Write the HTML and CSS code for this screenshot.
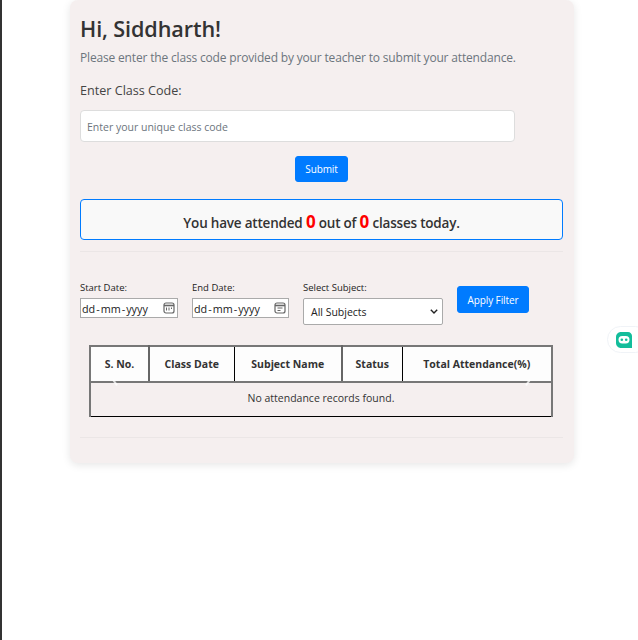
FILE: index.html
```html
<!DOCTYPE html>
<html lang="en">
<head>
  <meta charset="UTF-8">
  <title>Attendance</title>
  <link rel="stylesheet" href="styles.css">
</head>
<body>
  <div class="card">
    <h2 class="greeting">Hi, Siddharth!</h2>
    <p class="intro">Please enter the class code provided by your teacher to submit your attendance.</p>
    <label class="code-label" for="code">Enter Class Code:</label>
    <input class="code-input" id="code" type="text" placeholder="Enter your unique class code">
    <div class="submit-row"><button class="btn">Submit</button></div>
    <div class="summary">You have attended <span class="count">0</span> out of <span class="count">0</span> classes today.</div>
    <hr class="rule">
    <div class="filters">
      <div class="field">
        <label>Start Date:</label>
        <div class="date-box start-date">
          <span>dd<i>-</i>mm<i>-</i>yyyy</span>
          <svg width="12" height="12" viewBox="0 0 12 12"><rect x="1" y="1" width="10" height="10" rx="2" fill="none" stroke="#666" stroke-width="1.2"/><path d="M1 3.500h10" stroke="#666" stroke-width="1.600"/><path d="M3.500 5.500v3M6 5.500v3M8.500 5.500v1.500" stroke="#666"/></svg>
        </div>
      </div>
      <div class="field">
        <label>End Date:</label>
        <div class="date-box end-date">
          <span>dd<i>-</i>mm<i>-</i>yyyy</span>
          <svg width="12" height="12" viewBox="0 0 12 12"><rect x="1" y="1" width="10" height="10" rx="2" fill="none" stroke="#666" stroke-width="1.2"/><path d="M1 3.500h10" stroke="#666" stroke-width="1.600"/><path d="M3.500 6h5M3.500 8.500h3" stroke="#666"/></svg>
        </div>
      </div>
      <div class="field">
        <label>Select Subject:</label>
        <div class="select-box">
          <span>All Subjects</span>
          <svg width="8" height="5" viewBox="0 0 8 5"><path d="M.8.8 4 4l3.200-3.200" fill="none" stroke="#222" stroke-width="1.400"/></svg>
        </div>
      </div>
      <button class="btn btn-filter">Apply Filter</button>
    </div>
    <div class="table-wrap">
      <table class="records">
        <thead>
          <tr>
            <th class="col-sno">S. No.</th>
            <th class="col-date">Class Date</th>
            <th class="col-subject">Subject Name</th>
            <th class="col-status">Status</th>
            <th>Total Attendance(%)</th>
          </tr>
        </thead>
        <tbody>
          <tr><td colspan="5">No attendance records found.</td></tr>
        </tbody>
      </table>
      <span class="slide-mark mark-prev"></span>
      <span class="slide-mark mark-next"></span>
    </div>
    <hr class="rule rule-bottom">
  </div>
  <div class="chat-tab">
    <svg width="16" height="16" viewBox="0 0 16 16"><path d="M5 0h7c2.200 0 4 1.800 4 4v12H5c-2.800 0-5-2.200-5-5V5c0-2.800 2.200-5 5-5z" fill="#13bd9b"/><rect x="2.500" y="4" width="11" height="7.500" rx="3.700" fill="#fff"/><circle cx="5.800" cy="7.700" r="1.300" fill="#13bd9b"/><circle cx="10.200" cy="7.700" r="1.300" fill="#13bd9b"/></svg>
  </div>
</body>
</html>
```

FILE: styles.css
```css
* {
  box-sizing: border-box;
}
body {
  margin: 0;
  min-height: 640px;
  border-left: 2px solid #333;
  background: #fff;
  color: #333;
  font-family: "Open Sans", "Noto Sans", sans-serif;
  overflow: hidden;
}
.card {
  width: 504px;
  height: 463px;
  margin-left: 68px;
  padding: 15px 10px 0;
  background: #f5efef;
  border-radius: 8px;
  box-shadow: 0 2px 8px rgba(0, 0, 0, .1);
}
.greeting {
  margin: 0;
  font-size: 21.600px;
  line-height: 28px;
  font-weight: 600;
  letter-spacing: -.1px;
  color: #333;
}
.intro {
  margin: 6px 0 0;
  font-size: 12px;
  line-height: 18px;
  letter-spacing: -.17px;
  color: #6c757d;
}
.code-label {
  display: block;
  margin-top: 15px;
  font-size: 12.600px;
  line-height: 18px;
  color: #444;
}
.code-input {
  display: block;
  width: 435px;
  height: 32px;
  margin-top: 10px;
  padding: 2px 6px 0;
  background: #fff;
  border: 1px solid #ddd;
  border-radius: 4px;
  font: 10.500px "Open Sans", sans-serif;
}
.code-input::placeholder {
  color: #6c757d;
}
.submit-row {
  display: flex;
  justify-content: center;
  width: 483px;
  margin-top: 14px;
}
.btn {
  height: 26px;
  padding: 0 9px;
  background: #007bff;
  border: 1px solid #007bff;
  border-radius: 3px;
  color: #fff;
  font: 10px "Open Sans", sans-serif;
  letter-spacing: -.1px;
}
.summary {
  width: 483px;
  height: 41px;
  margin-top: 17px;
  padding-top: 12px;
  background: #f9f9f9;
  border: 1px solid #007bff;
  border-radius: 4px;
  text-align: center;
  font-size: 13.500px;
  line-height: 20px;
  font-weight: 600;
  letter-spacing: -.2px;
}
.count {
  color: #f00;
  font-size: 17px;
  font-weight: 700;
}
.rule {
  width: 483px;
  margin: 11px 0 0;
  border: 0;
  border-top: 1px solid #ebe6e6;
}
.filters {
  display: flex;
  align-items: flex-start;
  gap: 14px;
  margin-top: 30px;
}
.field label {
  display: block;
  font-size: 9.500px;
  line-height: 12px;
  margin-bottom: 4px;
  color: #222;
}
.date-box {
  display: flex;
  align-items: center;
  justify-content: space-between;
  height: 20px;
  padding: 0 2px 0 1px;
  background: #fff;
  border: 1px solid #aaa;
  font-size: 10.800px;
  color: #222;
}
.date-box i {
  font-style: normal;
  margin: 0 1px;
}
.start-date {
  width: 98px;
}
.end-date {
  width: 97px;
}
.select-box {
  display: flex;
  align-items: center;
  justify-content: space-between;
  width: 140px;
  height: 27px;
  padding: 0 4px 0 7px;
  background: #fff;
  border: 1px solid #aaa;
  border-radius: 2px;
  font-size: 10.500px;
  color: #222;
}
.btn-filter {
  width: 72px;
  height: 27px;
  padding: 0;
  margin-top: 4px;
}
.table-wrap {
  position: relative;
  width: 464px;
  margin: 20px 0 0 9px;
}
.records {
  width: 464px;
  height: 72px;
  border-collapse: collapse;
  table-layout: fixed;
  font-size: 10.500px;
}
.records th, .records td {
  border: 1px solid #000;
  text-align: center;
  padding: 0;
  color: #333;
}
.records thead tr {
  background: #fdfdfd;
  height: 36px;
}
.records th {
  font-weight: 700;
  border-top: 2px solid #777;
  border-bottom: 2px solid #777;
}
.records td {
  padding-bottom: 3px;
  font-weight: 400;
  border-left: 2px solid #777;
  border-right: 2px solid #777;
}
.records .col-sno {
  width: 59px;
  border-left: 2px solid #777;
  border-right: 2px solid #666;
}
.col-date {
  width: 85px;
}
.records .col-subject {
  width: 108px;
  border-right: 2px solid #666;
}
.col-status {
  width: 60px;
}
.records th:last-child {
  border-right: 2px solid #777;
}
.slide-mark {
  position: absolute;
  top: 34px;
  width: 2px;
  height: 7px;
  background: rgba(255, 255, 255, .75);
}
.mark-prev {
  left: 25px;
  transform: rotate(-35deg);
}
.mark-next {
  left: 438px;
  transform: rotate(35deg);
}
.rule-bottom {
  margin-top: 20px;
}
.chat-tab {
  position: absolute;
  top: 326px;
  left: 607px;
  width: 42px;
  height: 27px;
  padding: 4px 0 0 8px;
  background: #fff;
  border: 1px solid #f0f3f7;
  border-radius: 14px;
}
```
